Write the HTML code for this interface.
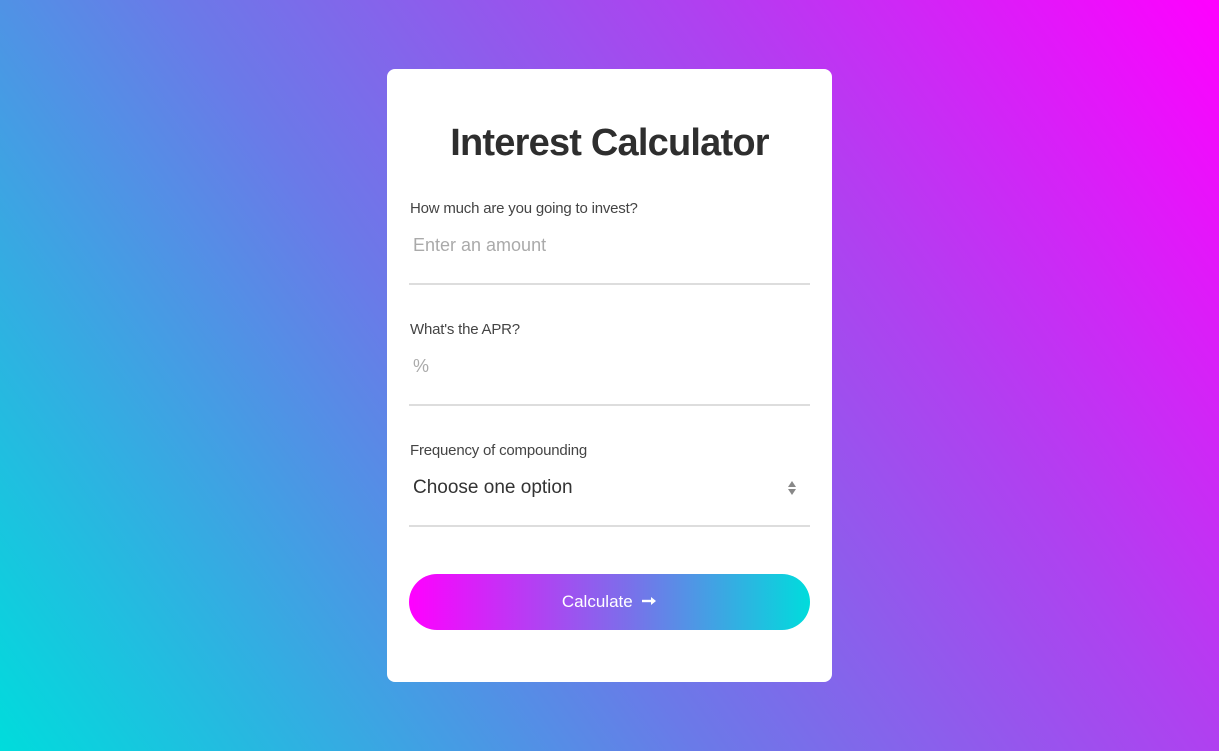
<!DOCTYPE html>
<html><head><meta charset="utf-8"><style>
html,body{margin:0;padding:0;width:1219px;height:751px;overflow:hidden}
body{background:linear-gradient(55deg,#00dcdc 0%,#6a7ae8 40%,#b040f0 70%,#ff00ff 100%);font-family:"Liberation Sans",sans-serif;position:relative}
.card{position:absolute;left:387px;top:69px;width:445px;height:613px;background:#fff;border-radius:8px}
h1{position:absolute;top:49px;left:0;width:445px;margin:0;text-align:center;font-size:38px;font-weight:bold;color:#2e2e2e;letter-spacing:-0.8px;line-height:50px}
.lbl{position:absolute;left:23px;font-size:15px;color:#444;line-height:20px;letter-spacing:-0.2px}
.ph{position:absolute;left:26px;font-size:18px;color:#aaa;line-height:24px}
.line{position:absolute;left:22px;width:401px;height:2px;background:#ddd}
.sel{position:absolute;left:26px;font-size:19px;color:#333;line-height:24px}
.arr{position:absolute;left:401px;width:0;height:0;border-left:4.5px solid transparent;border-right:4.5px solid transparent}
.btn{position:absolute;left:22px;top:505px;width:401px;height:56px;border-radius:28px;background:linear-gradient(90deg,#ff00ff,#7a70ea 55%,#00dcdc);color:#fff;font-size:17px;text-align:center;line-height:56px}
</style></head><body>
<div class="card">
<h1>Interest Calculator</h1>
<div class="lbl" style="top:130px">How much are you going to invest?</div>
<div class="ph" style="top:164px">Enter an amount</div>
<div class="line" style="top:214px"></div>
<div class="lbl" style="top:251px">What's the APR?</div>
<div class="ph" style="top:285px">%</div>
<div class="line" style="top:335px"></div>
<div class="lbl" style="top:372px">Frequency of compounding</div>
<div class="sel" style="top:407px">Choose one option</div>
<div class="arr" style="top:412px;border-bottom:6px solid #888"></div>
<div class="arr" style="top:420px;border-top:6px solid #888"></div>
<div class="line" style="top:456px"></div>
<div class="btn">Calculate&nbsp;&nbsp;<svg width="15" height="10" viewBox="0 0 15 10" style="vertical-align:middle;margin-top:-3px"><path d="M0 5H11" stroke="#fff" stroke-width="2.4"/><path d="M9 1L14 5L9 9Z" fill="#fff"/></svg></div>
</div>
</body></html>
